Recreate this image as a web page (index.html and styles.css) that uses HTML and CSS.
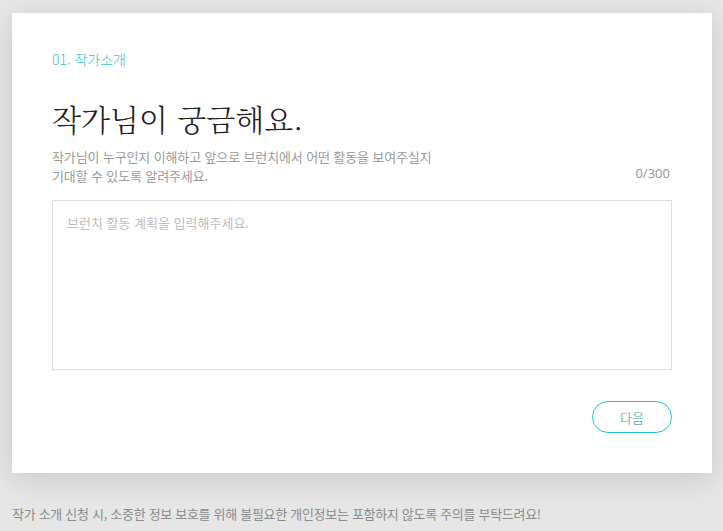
FILE: index.html
```html
<!DOCTYPE html>
<html lang="ko">
<head>
<meta charset="utf-8">
<link rel="stylesheet" href="styles.css">
</head>
<body>
<div class="page">
  <section class="card">
    <div class="step">01. 작가소개</div>
    <h1 class="title">작가님이 궁금해요.</h1>
    <div class="desc-row">
      <p class="desc">작가님이 누구인지 이해하고 앞으로 브런치에서 어떤 활동을 보여주실지<br>기대할 수 있도록 알려주세요.</p>
      <span class="count">0/300</span>
    </div>
    <textarea class="input" placeholder="브런치 활동 계획을 입력해주세요."></textarea>
    <div class="actions">
      <button class="next" type="button">다음</button>
    </div>
  </section>
  <p class="notice">작가 소개 신청 시, 소중한 정보 보호를 위해 불필요한 개인정보는 포함하지 않도록 주의를 부탁드려요!</p>
</div>
</body>
</html>
```
FILE: styles.css
```css
html, body {
  margin: 0;
  padding: 0;
}
body {
  background: #e6e6e6;
  font-family: "Noto Sans CJK KR", "Noto Sans", sans-serif;
  height: 531px;
  overflow: hidden;
}
.page {
  padding: 13px 11px 0 12px;
}
.card {
  width: 700px;
  box-sizing: border-box;
  background: #fff;
  padding: 36px 40px 40px 40px;
  box-shadow: 0 6px 28px rgba(0, 0, 0, 0.13);
}
.step {
  font-size: 14px;
  line-height: 20px;
  color: #39c3c3;
  font-weight: 300;
}
.title {
  margin: 29px 0 0;
  font-family: "Noto Serif CJK KR", "Noto Sans CJK KR", serif;
  font-weight: 300;
  font-size: 30px;
  line-height: 40px;
  color: #222;
}
.desc-row {
  margin-top: 9px;
  display: flex;
  justify-content: space-between;
  align-items: flex-end;
}
.desc {
  margin: 0;
  font-size: 13px;
  line-height: 19px;
  color: #9a9a9a;
  letter-spacing: -0.13px;
}
.count {
  font-family: "Noto Sans", sans-serif;
  font-size: 13px;
  line-height: 19px;
  color: #999;
  margin: 0 2px 2px 0;
}
.input {
  display: block;
  margin-top: 15px;
  width: 100%;
  height: 170px;
  box-sizing: border-box;
  border: 1px solid #dedede;
  padding: 12px 14px;
  resize: none;
  font-family: "Noto Sans CJK KR", sans-serif;
  font-size: 13px;
  line-height: 19px;
  color: #333;
  outline: none;
}
.input::placeholder {
  color: #bdbdbd;
}
.actions {
  margin-top: 31px;
  display: flex;
  justify-content: flex-end;
}
.next {
  width: 80px;
  height: 32px;
  border: 1px solid #1cc6c6;
  border-radius: 16px;
  background: #fff;
  color: #74b9b9;
  font-family: "Noto Sans CJK KR", sans-serif;
  font-size: 13px;
  padding: 0;
}
.notice {
  margin: 31px 0 0;
  font-size: 13px;
  line-height: 19px;
  color: #8a8a8a;
  letter-spacing: -0.3px;
}
```
